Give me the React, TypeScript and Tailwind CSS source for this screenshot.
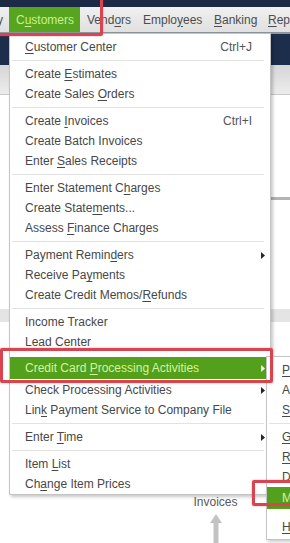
import type { ReactNode } from "react";

type MenuRow =
  | { kind: "sep"; line?: boolean; h?: string }
  | {
      kind: "item";
      label: string;
      u?: number;
      keys?: string;
      sub?: boolean;
      active?: boolean;
    };

const customerRows: MenuRow[] = [
  { kind: "item", label: "Customer Center", u: 0, keys: "Ctrl+J" },
  { kind: "sep" },
  { kind: "item", label: "Create Estimates", u: 7 },
  { kind: "item", label: "Create Sales Orders", u: 13 },
  { kind: "sep" },
  { kind: "item", label: "Create Invoices", u: 7, keys: "Ctrl+I" },
  { kind: "item", label: "Create Batch Invoices" },
  { kind: "item", label: "Enter Sales Receipts", u: 6 },
  { kind: "sep" },
  { kind: "item", label: "Enter Statement Charges", u: 17 },
  { kind: "item", label: "Create Statements...", u: 12 },
  { kind: "item", label: "Assess Finance Charges", u: 7 },
  { kind: "sep" },
  { kind: "item", label: "Payment Reminders", u: 13, sub: true },
  { kind: "item", label: "Receive Payments", u: 10 },
  { kind: "item", label: "Create Credit Memos/Refunds", u: 20 },
  { kind: "sep" },
  { kind: "item", label: "Income Tracker" },
  { kind: "item", label: "Lead Center" },
  { kind: "sep", line: false, h: "h-[5px]" },
  { kind: "item", label: "Credit Card Processing Activities", u: 12, sub: true, active: true },
  { kind: "item", label: "Check Processing Activities", sub: true },
  { kind: "item", label: "Link Payment Service to Company File", u: 3 },
  { kind: "sep" },
  { kind: "item", label: "Enter Time", u: 6, sub: true },
  { kind: "sep" },
  { kind: "item", label: "Item List", u: 5 },
  { kind: "item", label: "Change Item Prices", u: 2 },
];

const cardRows: MenuRow[] = [
  { kind: "item", label: "Process Payments", u: 0 },
  { kind: "item", label: "Add Card Reader" },
  { kind: "item", label: "Set Up Recurring Payments", u: 0 },
  { kind: "sep" },
  { kind: "item", label: "Go to Merchant Service Center", u: 0 },
  { kind: "item", label: "Reconcile Deposits", u: 0 },
  { kind: "item", label: "Download Payments" },
  { kind: "item", label: "Manage Payment Service", u: 0, active: true },
  { kind: "sep", line: false },
  { kind: "item", label: "Help with Payments", u: 0 },
];

function Mnemonic({ text, u }: { text: string; u?: number }) {
  if (u === undefined) return <>{text}</>;
  return (
    <>
      {text.slice(0, u)}
      <span className="underline decoration-1 underline-offset-2">{text[u]}</span>
      {text.slice(u + 1)}
    </>
  );
}

function SubArrow({ light }: { light?: boolean }) {
  return (
    <svg width="4" height="7" viewBox="0 0 4 7" className="mr-[1px] shrink-0">
      <polygon points="0,0 4,3.5 0,7" fill={light ? "#f4ffe6" : "#262626"} />
    </svg>
  );
}

function MenuRows({ rows, padRight }: { rows: MenuRow[]; padRight: string }) {
  return (
    <div className={`flex flex-col ${padRight}`}>
      {rows.map((row, i) => {
        if (row.kind === "sep") {
          return (
            <div key={i} className={`flex items-center px-[2px] ${row.h ?? "h-[7px]"}`}>
              {row.line !== false ? <div className="h-px w-full bg-[#e2e2e2]" /> : null}
            </div>
          );
        }
        const tone = row.active ? "bg-[#52a01c] text-[#d3f5a0]" : "text-[#474747]";
        return (
          <div
            key={i}
            className={`flex items-center whitespace-nowrap pl-[15px] ${row.active ? "h-[22px] mb-px" : "h-5"} ${tone}`}
          >
            <span className="flex-1">
              <Mnemonic text={row.label} u={row.u} />
            </span>
            {row.keys ? <span className="mr-[14px] text-[#545454]">{row.keys}</span> : null}
            {row.sub ? <SubArrow light={row.active} /> : null}
          </div>
        );
      })}
    </div>
  );
}

function BarItem({ width, children, active }: { width: string; children: ReactNode; active?: boolean }) {
  return (
    <div
      className={`flex shrink-0 items-center whitespace-nowrap pl-[7px] ${width} ${
        active ? "bg-[#57a41f] text-[#c8f28e]" : ""
      }`}
    >
      {children}
    </div>
  );
}

function RedBox({ className }: { className: string }) {
  return (
    <div
      className={`pointer-events-none absolute rounded-[2px] border-[3px] border-[#d8444f] shadow-[0_0_2px_rgba(216,68,79,0.55)] ${className}`}
    />
  );
}

export default function App() {
  return (
    <div className="relative h-[543px] w-[290px] overflow-hidden bg-white font-['Liberation_Sans',Arial,sans-serif] text-[12px] leading-[14px]">
      {/* window behind the menus */}
      <div className="h-[7px] bg-[#1c2a46]" />
      <div className="flex h-[25px] items-stretch bg-gradient-to-b from-[#f0f0f0] to-[#e0e0e0] text-[#4d4d4d]">
        <div className="flex w-[9px] shrink-0 justify-end overflow-hidden">
          <span className="flex items-center whitespace-nowrap pr-[6px]">Company</span>
        </div>
        <BarItem width="w-[71px]" active>
          <span>
            C<span className="underline underline-offset-2">u</span>stomers
          </span>
        </BarItem>
        <BarItem width="w-[56px]">
          <span>
            Vend<span className="underline underline-offset-2">o</span>rs
          </span>
        </BarItem>
        <BarItem width="w-[71px]">
          <span>
            Emplo<span className="underline underline-offset-2">y</span>ees
          </span>
        </BarItem>
        <BarItem width="w-[54px]">
          <span>
            <span className="underline underline-offset-2">B</span>anking
          </span>
        </BarItem>
        <BarItem width="w-[60px]">
          <span>
            <span className="underline underline-offset-2">R</span>eports
          </span>
        </BarItem>
      </div>
      <div className="h-[2px] bg-[#8f959d]" />
      <div className="h-[31px] bg-[#1d2d4c]" />
      <div className="h-[30px] border-b border-[#c8c8c8] bg-gradient-to-b from-[#d6d6d6] to-[#ececec]" />
      <div className="h-[102px]" />
      <div className="ml-[270px] h-[3px] bg-[#b3b3b3]" />
      <div className="h-[109px]" />
      <div className="h-[13px] bg-[#e4e4e4]" />
      <div className="ml-[192px] flex w-[47px] flex-col items-center pt-[173px]">
        <span className="text-[#585858]">Invoices</span>
        <svg width="12" height="30" viewBox="0 0 12 30" className="mt-[5px]">
          <polygon points="6,0 12,9 8.5,9 8.5,30 3.5,30 3.5,9 0,9" fill="#c3c3c3" />
        </svg>
      </div>

      {/* Customers drop-down */}
      <div className="absolute left-[9px] top-[33px] w-[262px] border border-[#c4c4c4] bg-white pt-[3px] shadow-[2px_2px_3px_rgba(0,0,0,0.22)]">
        <MenuRows rows={customerRows} padRight="pr-[4px]" />
      </div>

      {/* Credit card processing submenu */}
      <div className="absolute left-[266px] top-[356px] w-[80px] border border-[#c4c4c4] bg-white pb-[2px] pt-[3px] shadow-[2px_2px_3px_rgba(0,0,0,0.2)]">
        <MenuRows rows={cardRows} padRight="pr-0" />
      </div>

      <RedBox className="left-[-10px] top-[-10px] h-[46px] w-[113px]" />
      <RedBox className="left-0 top-[348px] h-[35px] w-[273px]" />
      <RedBox className="left-[252px] top-[480px] h-[26px] w-[50px]" />
    </div>
  );
}
